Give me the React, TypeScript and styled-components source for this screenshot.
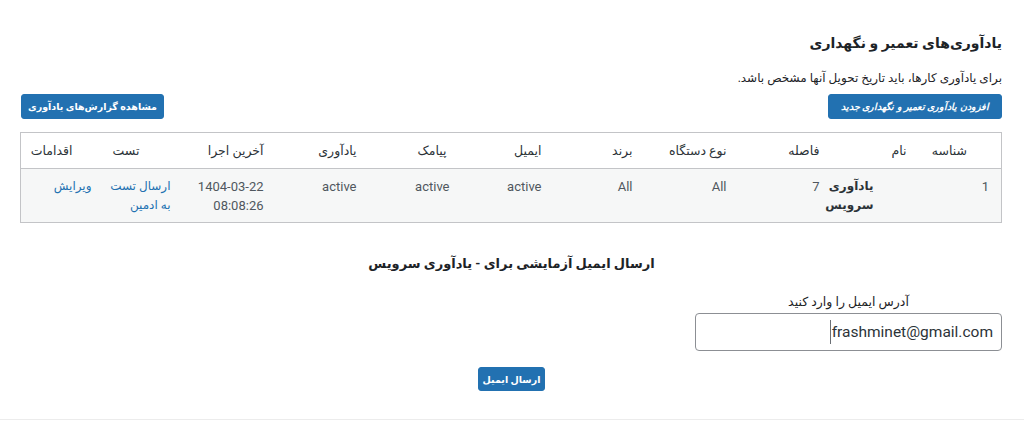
import styled, { createGlobalStyle } from "styled-components";

const GlobalStyle = createGlobalStyle`
  html, body {
    margin: 0;
    padding: 0;
    background: #ffffff;
  }
  body {
    font-family: Roboto, "DejaVu Sans", sans-serif;
    color: #1d2327;
  }
`;

const Page = styled.div`
  direction: rtl;
  box-sizing: border-box;
  height: 420px;
  padding: 30px 22px 0 21px;
  border-bottom: 1px solid #ececec;
`;

const Title = styled.h1`
  margin: 0;
  font-size: 14px;
  line-height: 26px;
  font-weight: 700;
  color: #1d2327;
`;

const Description = styled.p`
  margin: 13px 0 0;
  font-size: 12px;
  line-height: 18px;
  color: #1d2327;
`;

const ButtonRow = styled.div`
  display: flex;
  justify-content: space-between;
  align-items: center;
  margin-top: 7px;
`;

const PrimaryButton = styled.button<{ $italic?: boolean; $minWidth?: number }>`
  box-sizing: border-box;
  min-width: ${(p) => p.$minWidth ?? 0}px;
  height: 25px;
  padding: 0 6px;
  border: 1px solid #2271b1;
  border-radius: 3px;
  background: #2271b1;
  color: #ffffff;
  font-family: Roboto, "DejaVu Sans", sans-serif;
  font-size: 9.5px;
  font-weight: 700;
  font-style: ${(p) => (p.$italic ? "italic" : "normal")};
  white-space: nowrap;
  cursor: pointer;
`;

const Table = styled.table`
  width: 981px;
  margin-top: 13px;
  table-layout: fixed;
  border-collapse: collapse;
  border: 1px solid #c3c4c7;
  font-size: 13px;
`;

const HeadCell = styled.th<{ $pr: number }>`
  padding: 8px ${(p) => p.$pr}px 8px 0;
  line-height: 19px;
  text-align: right;
  font-weight: 400;
  font-size: 12.5px;
  color: #2c3338;
  border-bottom: 1px solid #c3c4c7;
  white-space: nowrap;
`;

const BodyRow = styled.tr`
  background: #f6f7f7;
`;

const Cell = styled.td<{ $pr?: number; $tone?: "link" | "strong" }>`
  padding: 8px ${(p) => p.$pr ?? 12}px 7px 0;
  line-height: 19px;
  vertical-align: top;
  text-align: right;
  white-space: nowrap;
  font-size: ${(p) => (p.$tone ? "12px" : "13px")};
  color: ${(p) =>
    p.$tone === "link" ? "#2271b1" : p.$tone === "strong" ? "#2c3338" : "#50575e"};
  font-weight: ${(p) => (p.$tone === "strong" ? 700 : 400)};
`;

const Numeric = styled.span`
  direction: ltr;
  unicode-bidi: embed;
`;

const TestSection = styled.section`
  display: flex;
  flex-direction: column;
  align-items: center;
  margin-top: 30px;
`;

const SectionTitle = styled.h2`
  margin: 0;
  font-size: 13px;
  line-height: 22px;
  font-weight: 700;
  color: #1d2327;
`;

const Field = styled.div`
  align-self: flex-start;
  display: flex;
  flex-direction: column;
  align-items: center;
  width: 307px;
  margin-top: 18px;
`;

const Label = styled.label`
  font-size: 12.5px;
  line-height: 18px;
  color: #1d2327;
`;

const InputWrap = styled.div`
  position: relative;
  margin-top: 2px;
`;

const EmailInput = styled.input`
  box-sizing: border-box;
  display: block;
  width: 307px;
  height: 38px;
  padding: 0 8px;
  border: 1px solid #8c8f94;
  border-radius: 4px;
  background: #ffffff;
  color: #2c3338;
  font-family: Roboto, "DejaVu Sans", sans-serif;
  font-size: 15.5px;
  text-align: right;
  direction: rtl;
  outline: none;
`;

/* text caret drawn over the input, as in the captured focused state */
const Caret = styled.span`
  position: absolute;
  top: 7px;
  right: 171px;
  width: 1px;
  height: 24px;
  background: #6b6f75;
`;

const SubmitButton = styled(PrimaryButton)`
  margin-top: 16px;
  height: 24px;
  padding: 0 4px;
`;

const columns = [
  { label: "شناسه", width: 82, pr: 34 },
  { label: "نام", width: 88, pr: 13 },
  { label: "فاصله", width: 93, pr: 12 },
  { label: "نوع دستگاه", width: 94, pr: 12 },
  { label: "برند", width: 91, pr: 12 },
  { label: "ایمیل", width: 92, pr: 12 },
  { label: "پیامک", width: 93, pr: 15 },
  { label: "یادآوری", width: 93, pr: 12 },
  { label: "آخرین اجرا", width: 93, pr: 12 },
  { label: "تست", width: 79, pr: 43 },
  { label: "اقدامات", width: 83, pr: 31 },
];

export default function App() {
  return (
    <>
      <GlobalStyle />
      <Page>
        <Title>یادآوری‌های تعمیر و نگهداری</Title>
        <Description>برای یادآوری کارها، باید تاریخ تحویل آنها مشخص باشد.</Description>

        <ButtonRow>
          <PrimaryButton $italic $minWidth={174}>
            افزودن یادآوری تعمیر و نگهداری جدید
          </PrimaryButton>
          <PrimaryButton>مشاهده گزارش‌های یادآوری</PrimaryButton>
        </ButtonRow>

        <Table>
          <colgroup>
            {columns.map((c) => (
              <col key={c.label} style={{ width: c.width }} />
            ))}
          </colgroup>
          <thead>
            <tr>
              {columns.map((c) => (
                <HeadCell key={c.label} $pr={c.pr}>
                  {c.label}
                </HeadCell>
              ))}
            </tr>
          </thead>
          <tbody>
            <BodyRow>
              <Cell>1</Cell>
              <Cell $pr={46} $tone="strong">
                یادآوری
                <br />
                سرویس
              </Cell>
              <Cell>7</Cell>
              <Cell>All</Cell>
              <Cell>All</Cell>
              <Cell>active</Cell>
              <Cell>active</Cell>
              <Cell>active</Cell>
              <Cell>
                <Numeric>1404-03-22</Numeric>
                <br />
                <Numeric>08:08:26</Numeric>
              </Cell>
              <Cell $tone="link">
                ارسال تست
                <br />
                به ادمین
              </Cell>
              <Cell $tone="link">ویرایش</Cell>
            </BodyRow>
          </tbody>
        </Table>

        <TestSection>
          <SectionTitle>ارسال ایمیل آزمایشی برای - یادآوری سرویس</SectionTitle>
          <Field>
            <Label htmlFor="test-email">آدرس ایمیل را وارد کنید</Label>
            <InputWrap>
              <EmailInput id="test-email" type="email" defaultValue="frashminet@gmail.com" />
              <Caret />
            </InputWrap>
          </Field>
          <SubmitButton $minWidth={67}>ارسال ایمیل</SubmitButton>
        </TestSection>
      </Page>
    </>
  );
}
